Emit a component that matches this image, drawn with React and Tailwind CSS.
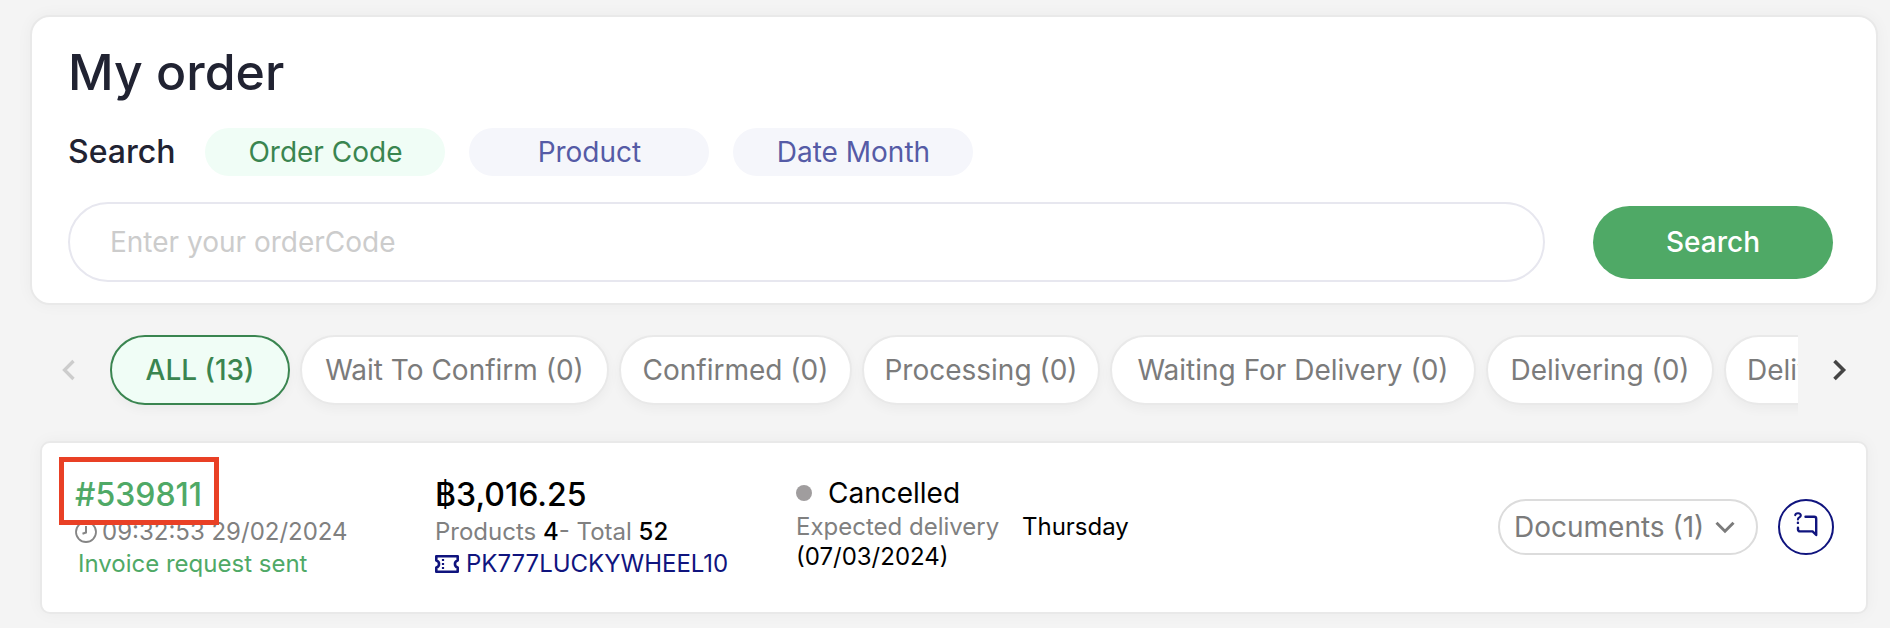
import { useState } from "react";
import { ChevronDown, ChevronLeft, ChevronRight } from "lucide-react";

const SEARCH_TYPES = ["Order Code", "Product", "Date Month"];

const STATUS_TABS = [
  { label: "ALL (13)", width: "w-[180px]" },
  { label: "Wait To Confirm (0)", width: "w-[309px]" },
  { label: "Confirmed (0)", width: "w-[233px]" },
  { label: "Processing (0)", width: "w-[238px]" },
  { label: "Waiting For Delivery (0)", width: "w-[366px]" },
  { label: "Delivering (0)", width: "w-[228px]" },
  { label: "Delivered (13)", width: "w-[228px]" },
];

function ClockIcon() {
  return (
    <svg
      viewBox="0 0 22 22"
      className="h-[22px] w-[22px] shrink-0"
      fill="none"
      stroke="#858585"
      strokeWidth="1.8"
      aria-hidden="true"
    >
      <circle cx="11" cy="11" r="10" />
      <path d="M11 5v6.5L7.500 12.800" strokeWidth="2" />
    </svg>
  );
}

function CouponIcon() {
  return (
    <svg
      viewBox="0 0 24 18"
      className="h-[18px] w-6 shrink-0"
      fill="none"
      stroke="#10147e"
      strokeWidth="2.6"
      strokeLinejoin="round"
      aria-hidden="true"
    >
      <path d="M1.3 1.3h21.4v4.2a3.6 3.6 0 0 0 0 7v4.2H1.3v-4.2a3.6 3.6 0 0 0 0-7z" />
      <path d="M8 4v2M8 8v2M8 12v2" strokeWidth="2.2" />
    </svg>
  );
}

function HelpChatIcon() {
  return (
    <svg
      viewBox="0 0 24 30"
      className="h-[30px] w-6"
      fill="none"
      stroke="#10147e"
      strokeWidth="2.4"
      strokeLinecap="round"
      strokeLinejoin="round"
      aria-hidden="true"
    >
      <path d="M1.2 3.2C1.500 .5 6.800 .5 6.800 3.500c0 2-2.900 1.700-2.900 3.900" strokeWidth="2.100" />
      <path d="M3.900 10.800v.1" />
      <path d="M11.500 4.700h8.700a2 2 0 0 1 2 2v16.300l-3.600-3.600H6a2 2 0 0 1-2-2v-1.600" />
    </svg>
  );
}

function SearchPanel() {
  const [type, setType] = useState("Order Code");
  return (
    <section className="rounded-[20px] border-2 border-[#e9e9e9] bg-white pl-9 pr-[43px] pt-[27px] pb-[21px] shadow-[0_0_16px_rgba(0,0,0,0.04)]">
      <h1 className="text-[50px] leading-[56px] font-medium text-[#212332]">My order</h1>
      <div className="mt-7 flex items-center gap-6">
        <span className="mr-1.5 text-[32px] leading-[48px] font-medium text-[#212332]">Search</span>
        {SEARCH_TYPES.map((name) => (
          <button
            key={name}
            onClick={() => setType(name)}
            className={
              "h-12 w-60 rounded-full text-[28px] leading-[48px] " +
              (name === type ? "bg-[#f0fdf6] text-[#3a8550]" : "bg-[#f5f6fb] text-[#555ba6]")
            }
          >
            {name}
          </button>
        ))}
      </div>
      <div className="mt-[26px] flex items-center gap-12">
        <input
          type="text"
          aria-label="Order code"
          placeholder="Enter your orderCode"
          className="h-20 min-w-0 flex-1 rounded-full border-2 border-[#e7e7ef] px-10 text-[28px] outline-none placeholder:text-[#cccccc]"
        />
        <button className="h-[73px] w-60 rounded-full bg-[#4fa966] text-[28px] font-medium text-white">
          Search
        </button>
      </div>
    </section>
  );
}

function StatusTabs() {
  const [active, setActive] = useState("ALL (13)");
  return (
    <nav className="mt-[30px] flex items-start pl-[21px] pr-[21px]">
      <button aria-label="Previous" className="flex h-[70px] w-[59px] items-center text-[#cccccc]">
        <ChevronLeft size={36} strokeWidth={2.2} strokeLinecap="butt" strokeLinejoin="miter" />
      </button>
      <div className="flex min-w-0 flex-1 gap-[10px] overflow-hidden pb-9">
        {STATUS_TABS.map((tab) => (
          <button
            key={tab.label}
            onClick={() => setActive(tab.label)}
            className={
              "h-[70px] shrink-0 rounded-full border-2 text-[28px] whitespace-nowrap shadow-[0_4px_12px_rgba(0,0,0,0.04)] " +
              tab.width +
              (tab.label === active
                ? " border-[#3a8550] bg-[#f0fdf6] font-medium text-[#3a8550]"
                : " border-[#e9e9e9] bg-white text-[#7b7b7b]")
            }
          >
            {tab.label}
          </button>
        ))}
      </div>
      <button aria-label="Next" className="flex h-[70px] w-[59px] items-center justify-end text-[#444444]">
        <ChevronRight size={36} strokeWidth={2.4} strokeLinecap="butt" strokeLinejoin="miter" />
      </button>
    </nav>
  );
}

function OrderCard() {
  return (
    <article className="mr-[10px] ml-[10px] grid grid-cols-[360px_361px_1fr_auto] rounded-[10px] border-2 border-[#e9e9e9] bg-white pt-[31px] pr-8 pb-8 pl-[33px] text-[24px] leading-8 whitespace-nowrap text-[#808080] shadow-[0_0_16px_rgba(0,0,0,0.04)]">
      <div>
        <div className="relative w-fit">
          <a href="#539811" className="block text-[32px] leading-[42px] font-medium text-[#4fa966]">
            #539811
          </a>
          {/* highlight frame, lies over the time row below */}
          <span className="pointer-events-none absolute -top-[17px] -right-[17px] -bottom-[9px] -left-4 border-5 border-[#e94025]" />
        </div>
        <p className="flex items-center gap-[5px]">
          <ClockIcon />
          09:32:53 29/02/2024
        </p>
        <p className="pl-[3px] text-[#4fa966]">Invoice request sent</p>
      </div>

      <div>
        <p className="text-[32px] leading-[42px] font-medium text-black">฿3,016.25</p>
        <p>
          Products <b className="font-medium text-black">4</b>- Total{" "}
          <b className="font-medium text-black">52</b>
        </p>
        <p className="flex items-center gap-[7px] text-[#10147e]">
          <CouponIcon />
          PK777LUCKYWHEEL10
        </p>
      </div>

      <div className="max-w-[360px] whitespace-normal">
        <p className="flex items-center gap-4 text-[28px] leading-[38px] text-black">
          <span className="h-4 w-4 rounded-full bg-[#a09d9e]" />
          Cancelled
        </p>
        <p className="leading-[30px]">
          Expected delivery <span className="ml-4 text-black">Thursday</span>{" "}
          <span className="text-black">(07/03/2024)</span>
        </p>
      </div>

      <div className="flex items-center gap-5 self-center">
        <button className="flex h-14 w-[260px] items-center justify-between rounded-full border-2 border-[#dcdcdc] pr-[14px] pl-[14px] text-[28px] text-[#7b7b7b]">
          Documents (1)
          <ChevronDown size={34} strokeWidth={2.1} strokeLinecap="butt" strokeLinejoin="miter" />
        </button>
        <button
          aria-label="Ask about this order"
          className="flex h-14 w-14 items-center justify-center rounded-full border-2 border-[#10147e]"
        >
          <HelpChatIcon />
        </button>
      </div>
    </article>
  );
}

export default function App() {
  return (
    <main className="min-h-screen bg-[#f4f4f4] pt-[15px] pr-3 pb-[14px] pl-[30px] font-[Inter,sans-serif]">
      <SearchPanel />
      <StatusTabs />
      <OrderCard />
    </main>
  );
}
